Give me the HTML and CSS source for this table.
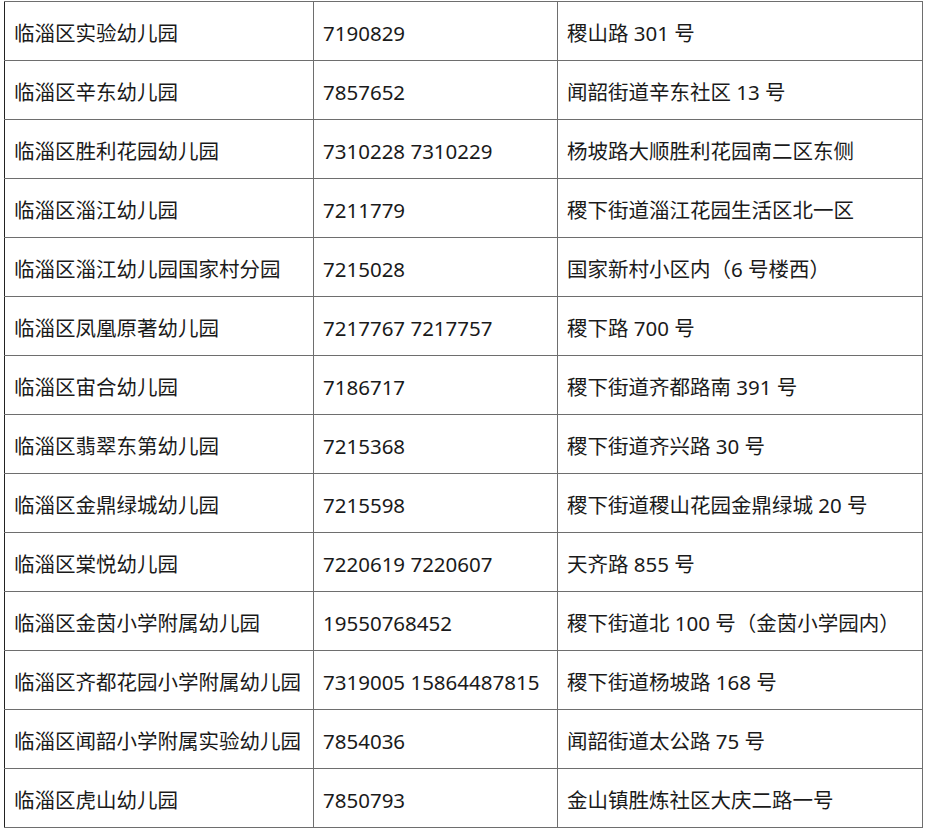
FILE: index.html
```html
<!DOCTYPE html>
<html lang="zh-CN">
<head>
<meta charset="utf-8">
<title>临淄区幼儿园</title>
<link rel="stylesheet" href="styles.css">
</head>
<body>
<div class="wrap">
<table class="list">
<colgroup><col class="c1"><col class="c2"><col class="c3"></colgroup>
<tbody>
<tr><td>临淄区实验幼儿园</td><td>7190829</td><td>稷山路 301 号</td></tr>
<tr><td>临淄区辛东幼儿园</td><td>7857652</td><td>闻韶街道辛东社区 13 号</td></tr>
<tr><td>临淄区胜利花园幼儿园</td><td>7310228 7310229</td><td>杨坡路大顺胜利花园南二区东侧</td></tr>
<tr><td>临淄区淄江幼儿园</td><td>7211779</td><td>稷下街道淄江花园生活区北一区</td></tr>
<tr><td>临淄区淄江幼儿园国家村分园</td><td>7215028</td><td>国家新村小区内（6 号楼西）</td></tr>
<tr><td>临淄区凤凰原著幼儿园</td><td>7217767 7217757</td><td>稷下路 700 号</td></tr>
<tr><td>临淄区宙合幼儿园</td><td>7186717</td><td>稷下街道齐都路南 391 号</td></tr>
<tr><td>临淄区翡翠东第幼儿园</td><td>7215368</td><td>稷下街道齐兴路 30 号</td></tr>
<tr><td>临淄区金鼎绿城幼儿园</td><td>7215598</td><td>稷下街道稷山花园金鼎绿城 20 号</td></tr>
<tr><td>临淄区棠悦幼儿园</td><td>7220619 7220607</td><td>天齐路 855 号</td></tr>
<tr><td>临淄区金茵小学附属幼儿园</td><td>19550768452</td><td>稷下街道北 100 号（金茵小学园内）</td></tr>
<tr><td>临淄区齐都花园小学附属幼儿园</td><td>7319005 15864487815</td><td>稷下街道杨坡路 168 号</td></tr>
<tr><td>临淄区闻韶小学附属实验幼儿园</td><td>7854036</td><td>闻韶街道太公路 75 号</td></tr>
<tr><td>临淄区虎山幼儿园</td><td>7850793</td><td>金山镇胜炼社区大庆二路一号</td></tr>
</tbody>
</table>
</div>
</body>
</html>
```

FILE: styles.css
```css
html, body {
  margin: 0;
  padding: 0;
  background: #ffffff;
}

.wrap {
  padding: 1px 0 0 4px;
}

.list {
  border-collapse: collapse;
  table-layout: fixed;
  width: 918px;
  font-family: "Noto Sans", "Noto Sans CJK SC", sans-serif;
  font-size: 20.5px;
  color: #1a1a1a;
}

.c1 { width: 309px; }
.c2 { width: 244px; }
.c3 { width: 365px; }

.list td {
  height: 59px;
  box-sizing: border-box;
  padding: 3px 0 0 9px;
  border: 1px solid #6e6e6e;
  vertical-align: middle;
  white-space: nowrap;
  line-height: 26px;
  overflow: hidden;
}

.list td:first-child {
  border-left-color: #222222;
}
```
